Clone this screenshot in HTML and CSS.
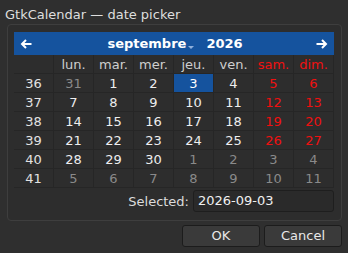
FILE: index.html
```html
<!DOCTYPE html>
<html lang="fr">
<head>
<meta charset="utf-8">
<title>GtkCalendar — date picker</title>
<link rel="stylesheet" href="styles.css">
</head>
<body>
<div class="title">GtkCalendar — date picker</div>
<div class="frame">
  <div class="cal-head">
    <svg class="arrow" width="12" height="10" viewBox="0 0 12 10"><path d="M11.5 5H2M6 1L2 5l4 4" fill="none" stroke="#fff" stroke-width="2"/></svg>
    <div class="month-year">
      <span class="month">septembre</span>
      <svg class="drop" width="6" height="3" viewBox="0 0 6 3"><path d="M0 0h6L3 3z" fill="#8fb0dc"/></svg>
      <span class="year">2026</span>
    </div>
    <svg class="arrow" width="12" height="10" viewBox="0 0 12 10"><path d="M0.5 5H10M6 1l4 4-4 4" fill="none" stroke="#fff" stroke-width="2"/></svg>
  </div>
  <div class="grid">
    <div class="c"></div><div class="c dn">lun.</div><div class="c dn">mar.</div><div class="c dn">mer.</div><div class="c dn">jeu.</div><div class="c dn">ven.</div><div class="c dn we">sam.</div><div class="c dn we">dim.</div>
    <div class="c wk">36</div><div class="c o">31</div><div class="c">1</div><div class="c">2</div><div class="c sel">3</div><div class="c">4</div><div class="c we">5</div><div class="c we">6</div>
    <div class="c wk">37</div><div class="c">7</div><div class="c">8</div><div class="c">9</div><div class="c">10</div><div class="c">11</div><div class="c we">12</div><div class="c we">13</div>
    <div class="c wk">38</div><div class="c">14</div><div class="c">15</div><div class="c">16</div><div class="c">17</div><div class="c">18</div><div class="c we">19</div><div class="c we">20</div>
    <div class="c wk">39</div><div class="c">21</div><div class="c">22</div><div class="c">23</div><div class="c">24</div><div class="c">25</div><div class="c we">26</div><div class="c we">27</div>
    <div class="c wk">40</div><div class="c">28</div><div class="c">29</div><div class="c">30</div><div class="c o">1</div><div class="c o">2</div><div class="c o">3</div><div class="c o">4</div>
    <div class="c wk">41</div><div class="c o">5</div><div class="c o">6</div><div class="c o">7</div><div class="c o">8</div><div class="c o">9</div><div class="c o">10</div><div class="c o">11</div>
  </div>
  <div class="sel-row">
    <span class="sel-label">Selected:</span>
    <div class="entry">2026-09-03</div>
  </div>
</div>
<div class="buttons">
  <button class="btn">OK</button>
  <button class="btn">Cancel</button>
</div>
</body>
</html>
```

FILE: styles.css
```css
html, body {
  margin: 0;
  padding: 0;
  background: #2f2f2f;
  color: #e6e6e6;
  font-family: "DejaVu Sans", "Liberation Sans", sans-serif;
  font-size: 13px;
}

.title {
  padding: 7px 0 0 5px;
  line-height: 15px;
  height: 17px;
  color: #dedede;
}

.frame {
  margin-left: 7px;
  width: 335px;
  height: 197px;
  box-sizing: border-box;
  border: 1px solid #3e3e3e;
  border-radius: 4px;
  padding: 7px 7px 0 6px;
  background: #2d2d2d;
}

.cal-head {
  height: 23px;
  width: 320px;
  background: #15539e;
  display: flex;
  align-items: center;
  justify-content: space-between;
  padding: 0 6px 0 6px;
  box-sizing: border-box;
  color: #fff;
}

.arrow {
  display: block;
}

.month-year {
  display: flex;
  align-items: center;
  font-weight: bold;
  line-height: 15px;
  margin-left: 2px;
}

.drop {
  display: block;
  margin: 8px 12px 0 2px;
}

.grid {
  display: grid;
  grid-template-columns: repeat(8, 40px);
  grid-auto-rows: 19px;
  width: 320px;
}

.c {
  box-sizing: border-box;
  border-right: 1px solid #262626;
  border-bottom: 1px solid #262626;
  display: flex;
  align-items: center;
  justify-content: center;
  line-height: 15px;
  color: #eeeeee;
}

.dn {
  color: #cfcfcf;
}

.wk {
  color: #e2e2e2;
}

.o {
  color: #8a8a8a;
}

.we {
  color: #f01010;
}

.sel {
  background: #15539e;
  background-clip: padding-box;
  color: #ffffff;
}

.sel-row {
  display: flex;
  align-items: center;
  justify-content: flex-end;
  margin-top: 2px;
  width: 320px;
}

.sel-label {
  color: #dcdcdc;
  margin-right: 4px;
}

.entry {
  width: 141px;
  height: 22px;
  box-sizing: border-box;
  border: 1px solid #1e1e1e;
  border-radius: 3px;
  background: #2a2a2a;
  padding-left: 4px;
  line-height: 20px;
  color: #f0f0f0;
}

.buttons {
  display: flex;
  justify-content: flex-end;
  gap: 4px;
  margin-top: 4px;
  padding-right: 6px;
}

.btn {
  width: 78px;
  height: 22px;
  box-sizing: border-box;
  border: 1px solid #1c1c1c;
  border-radius: 3px;
  background: #3a3a3a;
  color: #e8e8e8;
  font-family: "DejaVu Sans", "Liberation Sans", sans-serif;
  font-size: 13px;
  padding: 0;
  line-height: 20px;
}
```
